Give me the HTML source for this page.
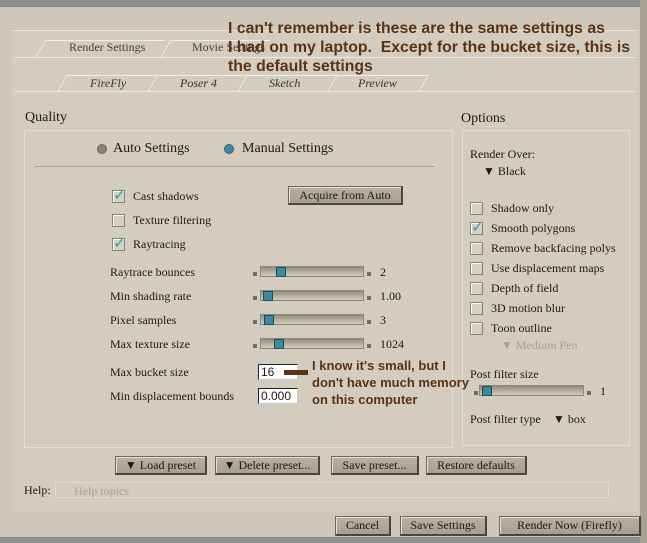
<!DOCTYPE html>
<html><head><style>
body{margin:0;width:647px;height:543px;overflow:hidden;background:#cfc7b7;font-family:"Liberation Serif",serif;color:#1e1a14;position:relative}
div,span{position:absolute;box-sizing:border-box}
.t{font-size:12px;white-space:nowrap}
.cb{width:13px;height:13px;border:1px solid #8a8274;background:#d6cfc2;box-shadow:inset 1px 1px 0 #fff}
.chk::after{content:"✓";position:absolute;left:0;top:-6px;font-size:16px;font-weight:bold;color:#2aa6b8;font-family:"DejaVu Sans",sans-serif}
.btn{height:19px;background:linear-gradient(#b8b2a2,#a59f8f);border:1px solid #6f6a5e;border-right:2px solid #4a463e;border-bottom:2px solid #4a463e;box-shadow:inset 1px 1px 0 #e4dfd2;font-size:12px;text-align:center;line-height:16px;white-space:nowrap}
.tr{width:104px;height:11px;background:linear-gradient(#958c7c,#d4ccbc);border:1px solid #8c8474}
.th{width:10px;height:10px;background:#3a8a9e;border:1px solid #1d4e5c;top:0}
.sq{width:4px;height:4px;background:#6b6a66}
.an{font-family:"Liberation Sans",sans-serif;font-weight:bold;color:#5a3214;white-space:nowrap}
.tab{font-style:italic;font-size:12px;color:#333}
</style></head><body>
<div style="left:0;top:0;width:647px;height:7px;background:#8e8e8e"></div>
<div style="left:0;top:537px;width:647px;height:6px;background:#8e8e8e"></div>
<div style="left:640px;top:0;width:7px;height:543px;background:#a8a296"></div>
<div style="left:12px;top:30px;width:625px;height:482px;background:#d4ccbe;border-top:1px solid #e8e2d6"></div>
<div style="left:15px;top:57px;width:620px;height:1px;background:#f0ebe0"></div>
<div style="left:15px;top:91px;width:620px;height:1px;background:#f0ebe0"></div>
<div class="t" style="left:69px;top:40px;color:#444">Render Settings</div>
<div class="t" style="left:192px;top:40px;color:#444">Movie Settings</div>
<div style="left:40px;top:40px;width:120px;height:18px;border-top:1px solid #eee;border-left:1px solid #eee;transform:skewX(-30deg)"></div>
<div style="left:165px;top:40px;width:100px;height:18px;border-top:1px solid #eee;border-left:1px solid #eee;transform:skewX(-30deg)"></div>
<div style="left:62px;top:75px;width:90px;height:17px;border-top:1px solid #eee;border-left:1px solid #eee;transform:skewX(-30deg)"></div>
<div style="left:152px;top:75px;width:90px;height:17px;border-top:1px solid #eee;border-left:1px solid #eee;transform:skewX(-30deg)"></div>
<div style="left:242px;top:75px;width:90px;height:17px;border-top:1px solid #eee;border-left:1px solid #eee;transform:skewX(-30deg)"></div>
<div style="left:332px;top:75px;width:92px;height:17px;border-top:1px solid #eee;border-left:1px solid #eee;border-right:1px solid #eee;transform:skewX(-30deg)"></div>
<div class="tab" style="left:90px;top:76px">FireFly</div>
<div class="tab" style="left:180px;top:76px">Poser 4</div>
<div class="tab" style="left:269px;top:76px">Sketch</div>
<div class="tab" style="left:358px;top:76px">Preview</div>
<div class="an" style="left:228px;top:19px;font-size:15.8px;line-height:19px">I can't remember is these are the same settings as<br>I had on my laptop.&nbsp; Except for the bucket size, this is<br>the default settings</div>
<div class="t" style="left:25px;top:110px;font-size:14px">Quality</div>
<div class="t" style="left:461px;top:111px;font-size:14px">Options</div>
<div style="left:24px;top:130px;width:429px;height:318px;border:1px solid #e6e0d4"></div>
<div style="left:462px;top:130px;width:168px;height:316px;border:1px solid #e6e0d4"></div>
<div style="left:97px;top:144px;width:10px;height:10px;border-radius:50%;background:#8a8478;border:1px solid #666"></div>
<div class="t" style="left:113px;top:141px;font-size:14px">Auto Settings</div>
<div style="left:224px;top:144px;width:10px;height:10px;border-radius:50%;background:#2f8fb0;border:1px solid #555"></div>
<div class="t" style="left:242px;top:141px;font-size:14px">Manual Settings</div>
<div style="left:35px;top:166px;width:400px;height:1px;background:#a8a092"></div>
<div class="cb chk" style="left:112px;top:190px"></div><div class="t" style="left:133px;top:189px">Cast shadows</div>
<div class="cb" style="left:112px;top:214px"></div><div class="t" style="left:133px;top:213px">Texture filtering</div>
<div class="cb chk" style="left:112px;top:238px"></div><div class="t" style="left:133px;top:237px">Raytracing</div>
<div class="btn" style="left:288px;top:186px;width:115px">Acquire from Auto</div>
<div class="t" style="left:110px;top:265px">Raytrace bounces</div>
<div class="t" style="left:110px;top:289px">Min shading rate</div>
<div class="t" style="left:110px;top:313px">Pixel samples</div>
<div class="t" style="left:110px;top:337px">Max texture size</div>
<div class="sq" style="left:253px;top:272px"></div><div class="tr" style="left:260px;top:266px"><div class="th" style="left:15px"></div></div><div class="sq" style="left:367px;top:272px"></div><div class="t" style="left:380px;top:265px">2</div>
<div class="sq" style="left:253px;top:296px"></div><div class="tr" style="left:260px;top:290px"><div class="th" style="left:2px"></div></div><div class="sq" style="left:367px;top:296px"></div><div class="t" style="left:380px;top:289px">1.00</div>
<div class="sq" style="left:253px;top:320px"></div><div class="tr" style="left:260px;top:314px"><div class="th" style="left:3px"></div></div><div class="sq" style="left:367px;top:320px"></div><div class="t" style="left:380px;top:313px">3</div>
<div class="sq" style="left:253px;top:344px"></div><div class="tr" style="left:260px;top:338px"><div class="th" style="left:13px"></div></div><div class="sq" style="left:367px;top:344px"></div><div class="t" style="left:380px;top:337px">1024</div>
<div class="t" style="left:110px;top:365px">Max bucket size</div>
<div class="t" style="left:110px;top:389px">Min displacement bounds</div>
<div style="left:258px;top:364px;width:40px;height:16px;background:#fff;border:1px solid #222;border-right-color:#ccc;border-bottom-color:#ccc;font-family:'Liberation Sans',sans-serif;font-size:12px;line-height:14px;padding-left:2px">16</div>
<div style="left:258px;top:388px;width:40px;height:16px;background:#fff;border:1px solid #222;border-right-color:#ccc;border-bottom-color:#ccc;font-family:'Liberation Sans',sans-serif;font-size:12px;line-height:14px;padding-left:2px">0.000</div>
<div style="left:284px;top:370px;width:24px;height:5px;background:#5a3214"></div>
<div class="an" style="left:312px;top:357px;font-size:13px;line-height:17px">I know it's small, but I<br>don't have much memory<br>on this computer</div>
<div class="t" style="left:470px;top:147px">Render Over:</div>
<div class="t" style="left:483px;top:164px">▼ Black</div>
<div class="cb" style="left:470px;top:202px"></div><div class="t" style="left:491px;top:201px">Shadow only</div>
<div class="cb chk" style="left:470px;top:222px"></div><div class="t" style="left:491px;top:221px">Smooth polygons</div>
<div class="cb" style="left:470px;top:242px"></div><div class="t" style="left:491px;top:241px">Remove backfacing polys</div>
<div class="cb" style="left:470px;top:262px"></div><div class="t" style="left:491px;top:261px">Use displacement maps</div>
<div class="cb" style="left:470px;top:282px"></div><div class="t" style="left:491px;top:281px">Depth of field</div>
<div class="cb" style="left:470px;top:302px"></div><div class="t" style="left:491px;top:301px">3D motion blur</div>
<div class="cb" style="left:470px;top:322px"></div><div class="t" style="left:491px;top:321px">Toon outline</div>
<div class="t" style="left:501px;top:338px;color:#a8a194">▼ Medium Pen</div>
<div class="t" style="left:470px;top:367px">Post filter size</div>
<div class="sq" style="left:474px;top:391px"></div><div class="tr" style="left:479px;top:385px;width:105px"><div class="th" style="left:2px"></div></div><div class="sq" style="left:587px;top:391px"></div><div class="t" style="left:600px;top:384px">1</div>
<div class="t" style="left:470px;top:412px">Post filter type</div>
<div class="t" style="left:553px;top:412px">▼ box</div>
<div class="btn" style="left:115px;top:456px;width:92px">▼ Load preset</div>
<div class="btn" style="left:215px;top:456px;width:105px">▼ Delete preset...</div>
<div class="btn" style="left:331px;top:456px;width:88px">Save preset...</div>
<div class="btn" style="left:426px;top:456px;width:101px">Restore defaults</div>
<div class="t" style="left:24px;top:483px">Help:</div>
<div style="left:55px;top:482px;width:554px;height:16px;border:1px solid #e2dccf"></div>
<div class="t" style="left:74px;top:484px;color:#aaa396">Help topics</div>
<div class="btn" style="left:335px;top:516px;width:56px;height:20px;line-height:17px">Cancel</div>
<div class="btn" style="left:400px;top:516px;width:87px;height:20px;line-height:17px">Save Settings</div>
<div class="btn" style="left:499px;top:516px;width:142px;height:20px;line-height:17px">Render Now (Firefly)</div>
</body></html>
